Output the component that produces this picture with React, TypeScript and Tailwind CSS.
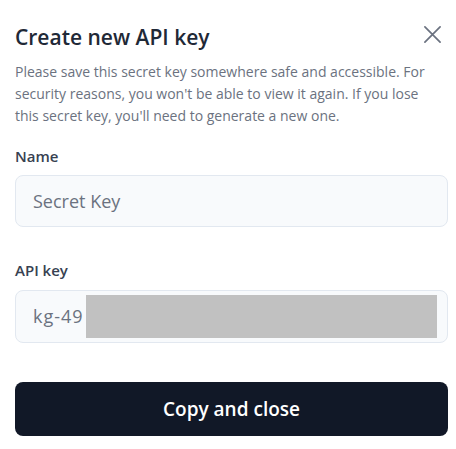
import React from 'react';

export default function App() {
  return (
    <div
      className="w-[456px] h-[449px] bg-white pl-[15px] pr-[8px] pt-[22px]"
      style={{ fontFamily: '"Open Sans", "Liberation Sans", sans-serif' }}
    >
      <div className="flex items-center justify-between">
        <h1 className="text-[21px] leading-[30px] font-semibold text-[#1f2937]">Create new API key</h1>
        <button type="button" aria-label="Close" className="mr-[6px] -mt-[5px] text-[#6b7280]">
          <svg width="19" height="19" viewBox="0 0 20 20" fill="none" stroke="currentColor" strokeWidth="1.8" strokeLinecap="round">
            <path d="M2 2 L18 18 M18 2 L2 18" />
          </svg>
        </button>
      </div>

      <p className="mt-[9px] pr-[10px] text-[14px] leading-[22px] text-[#6b7280]">
        Please save this secret key somewhere safe and accessible. For security reasons, you won't be able to view it
        again. If you lose this secret key, you'll need to generate a new one.
      </p>

      <label className="mt-[19px] block text-[15px] leading-[20px] font-semibold text-[#374151]">Name</label>
      <div className="mt-[9px] h-[52px] flex items-center rounded-[8px] border border-[#e2e8f0] bg-[#f8fafc] px-[17px]">
        <span className="text-[18px] text-[#6b7280]">Secret Key</span>
      </div>

      <label className="mt-[33px] block text-[15px] leading-[20px] font-semibold text-[#374151]">API key</label>
      <div className="mt-[10px] h-[53px] flex items-center rounded-[8px] border border-[#e2e8f0] bg-[#f8fafc] pl-[17px] pr-[10px]">
        <span className="text-[18px] tracking-[1px] text-[#6b7280]">kg-49</span>
        <div className="ml-[2px] h-[43px] flex-1 bg-[#c1c1c1]" />
      </div>

      <button
        type="button"
        className="mt-[39px] w-full h-[54px] rounded-[8px] bg-[#111827] text-white text-[19px] font-semibold"
      >
        Copy and close
      </button>
    </div>
  );
}
